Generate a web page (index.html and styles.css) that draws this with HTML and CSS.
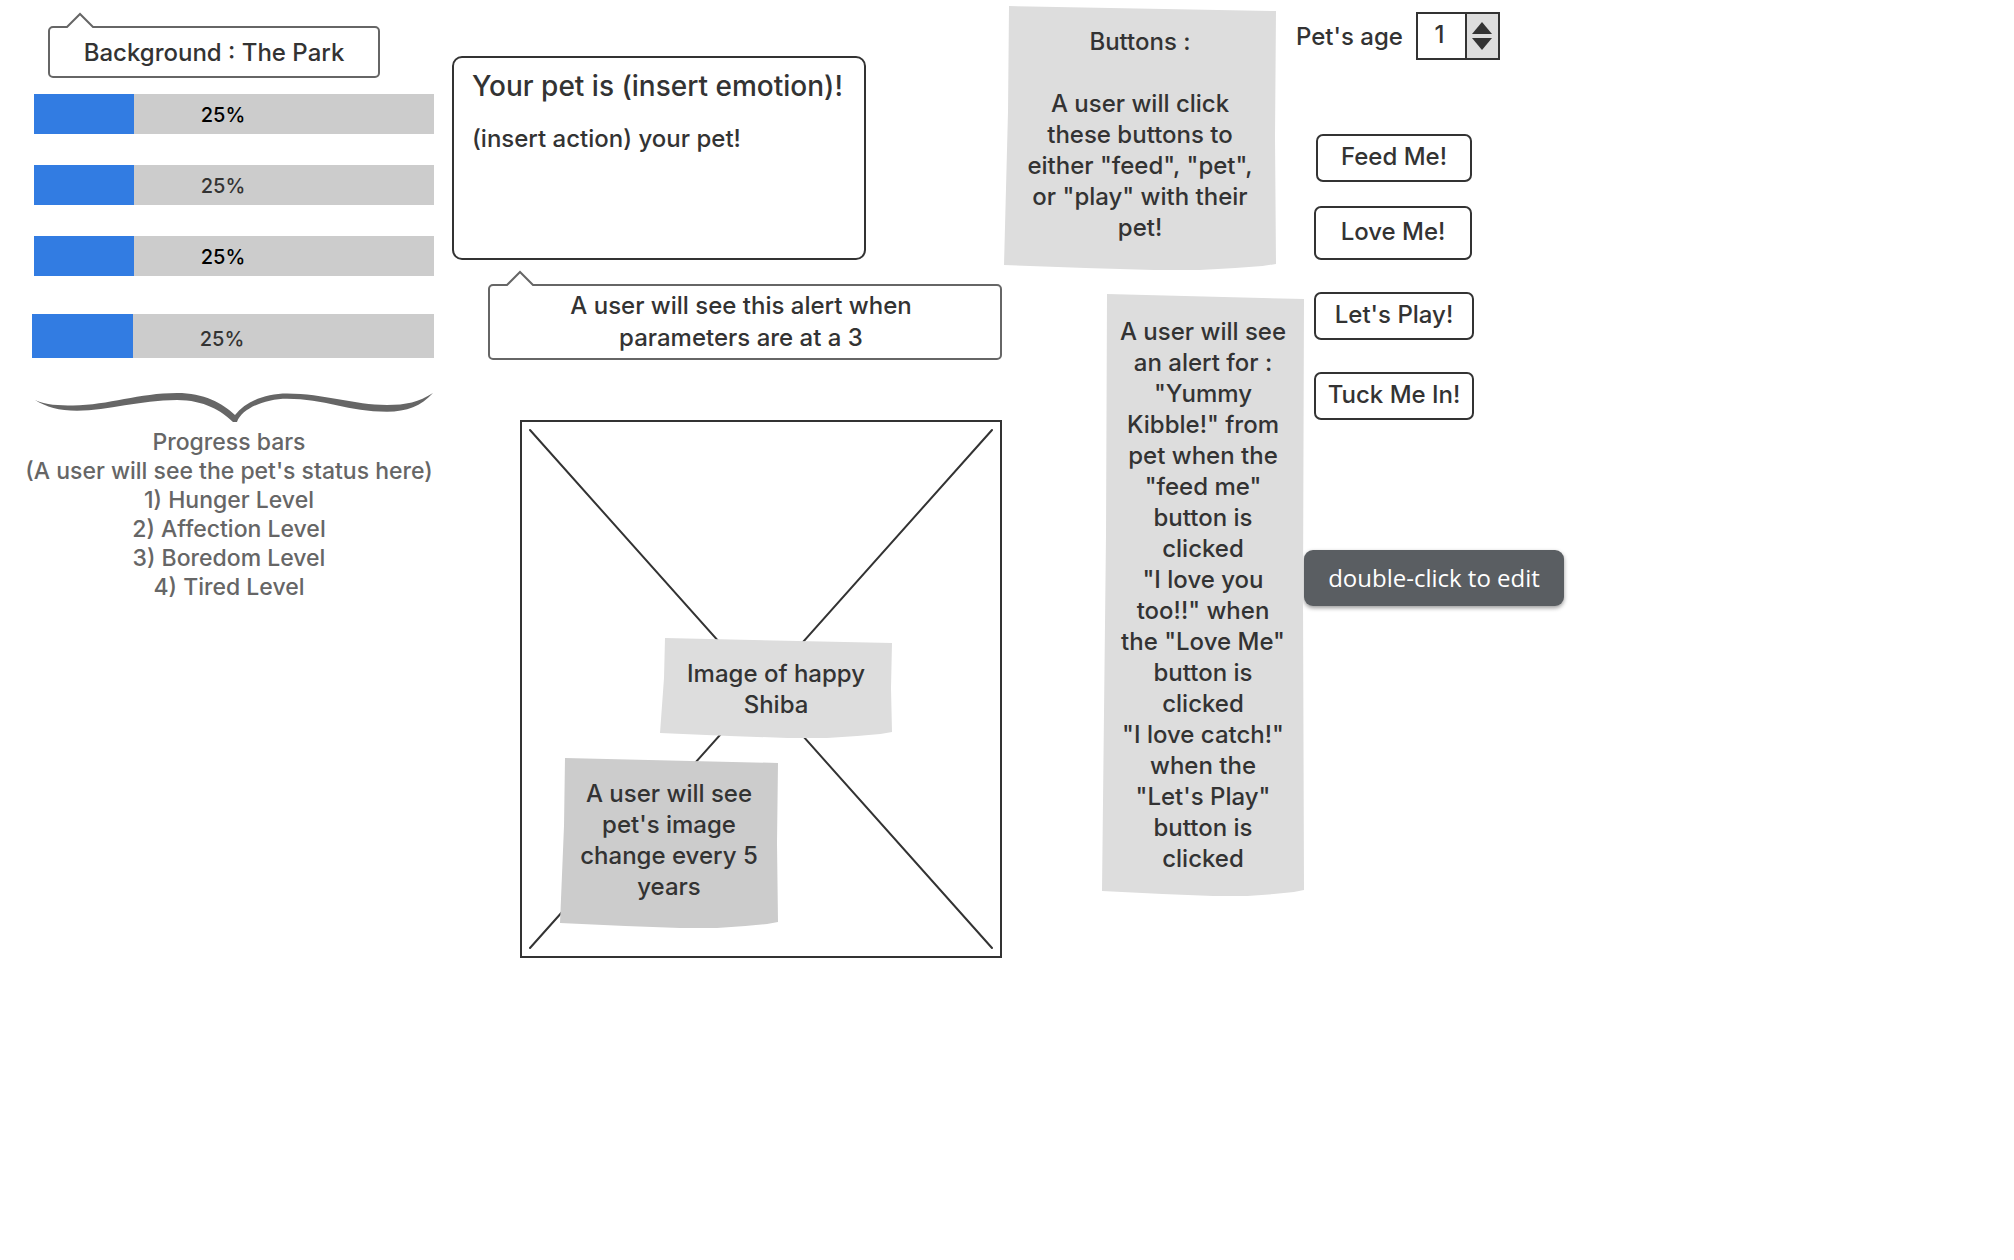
FILE: index.html
```html
<!DOCTYPE html>
<html lang="en">
<head>
<meta charset="utf-8">
<meta name="viewport" content="width=device-width, initial-scale=1">
<title>Virtual Pet Wireframe</title>
<link rel="stylesheet" href="styles.css">
</head>
<body>
<main class="board">
  <section class="status">
    <div class="callout callout-scene">
      <svg class="callout-tip" viewBox="0 0 32 16" aria-hidden="true"><path d="M2 16 16 2 30 16"/></svg>
      Background : The Park
    </div>
    <div class="bar bar-strong" role="progressbar" aria-label="Hunger" aria-valuenow="25"><div class="bar-fill" style="width:25%"></div><span class="bar-value">25%</span></div>
    <div class="bar" role="progressbar" aria-label="Affection" aria-valuenow="25"><div class="bar-fill" style="width:25%"></div><span class="bar-value">25%</span></div>
    <div class="bar bar-strong" role="progressbar" aria-label="Boredom" aria-valuenow="25"><div class="bar-fill" style="width:25%"></div><span class="bar-value">25%</span></div>
    <div class="bar bar-tall" role="progressbar" aria-label="Tiredness" aria-valuenow="25"><div class="bar-fill" style="width:25%"></div><span class="bar-value">25%</span></div>
    <svg class="brace" viewBox="0 0 400 30" preserveAspectRatio="none" aria-hidden="true"><path d="M1 8C12 13 25 13.500 39 13.500C75 13 105 1 143 1C170 1 188 11 201 23C212 9 232 1.500 253 1.500C290 1.500 320 13 353 13C372 13 385 10 399 1C387 14 373 19.700 353 19.700C315 19.700 290 6.700 253 6.700C232 6.700 208 16 203 30L199 30C188 19 170 8 143 8C105 8 75 18.700 43 18.700C25 18.700 12 15 1 8Z"/></svg>
    <p class="legend">Progress bars<br>(A user will see the pet's status here)<br>1) Hunger Level<br>2) Affection Level<br>3) Boredom Level<br>4) Tired Level</p>
  </section>

  <section class="stage">
    <div class="alert">
      <h1 class="alert-title">Your pet is (insert emotion)!</h1>
      <p class="alert-text">(insert action) your pet!</p>
    </div>
    <div class="callout callout-alert">
      <svg class="callout-tip" viewBox="0 0 32 16" aria-hidden="true"><path d="M2 16 16 2 30 16"/></svg>
      A user will see this alert when<br>parameters are at a 3
    </div>
    <div class="picture">
      <svg class="picture-cross" viewBox="0 0 478 534" preserveAspectRatio="none" aria-hidden="true"><path d="M8 8 470 526M470 8 8 526"/></svg>
      <p class="note note-image">Image of happy<br>Shiba</p>
      <p class="note note-years">A user will see<br>pet's image<br>change every 5<br>years</p>
    </div>
  </section>

  <section class="side">
    <div class="notes">
      <p class="note note-buttons">Buttons :<br><br>A user will click<br>these buttons to<br>either "feed", "pet",<br>or "play" with their<br>pet!</p>
      <p class="note note-alerts">A user will see<br>an alert for :<br>"Yummy<br>Kibble!" from<br>pet when the<br>"feed me"<br>button is<br>clicked<br>"I love you<br>too!!" when<br>the "Love Me"<br>button is<br>clicked<br>"I love catch!"<br>when the<br>"Let's Play"<br>button is<br>clicked</p>
    </div>
    <div class="controls">
      <div class="age">
        <label for="age">Pet's age</label>
        <div class="stepper">
          <input class="stepper-value" id="age" type="number" value="1">
          <div class="stepper-buttons">
            <button class="stepper-button" type="button" aria-label="Increase age"><svg viewBox="0 0 20 12" aria-hidden="true"><path d="M10 0 20 12H0Z"/></svg></button>
            <button class="stepper-button" type="button" aria-label="Decrease age"><svg viewBox="0 0 20 12" aria-hidden="true"><path d="M0 0H20L10 12Z"/></svg></button>
          </div>
        </div>
      </div>
      <div class="actions">
        <button class="action action-feed" type="button">Feed Me!</button>
        <button class="action action-love" type="button">Love Me!</button>
        <button class="action" type="button">Let's Play!</button>
        <button class="action" type="button">Tuck Me In!</button>
      </div>
      <div class="hint" role="tooltip">double-click to edit</div>
    </div>
  </section>
</main>
</body>
</html>
```
FILE: styles.css
```css
* { box-sizing: border-box; }

body {
  margin: 0;
  background: #fff;
  color: #333;
  font: 500 24px/31px Inter, "Noto Sans", sans-serif;
}

h1, p { margin: 0; }

button, input {
  font: inherit;
  color: inherit;
}

.board {
  display: grid;
  grid-template-columns: minmax(0, 452fr) minmax(0, 552fr) minmax(0, 1010fr);
  align-items: start;
}

/* Status column */
.status { padding: 26px 18px 0 34px; }

.callout {
  position: relative;
  border: 2px solid #666;
  border-radius: 5px;
  text-align: center;
}

.callout-tip {
  position: absolute;
  top: -16px;
  left: 14px;
  width: 32px;
  height: 16px;
  fill: #fff;
  stroke: #666;
  stroke-width: 2;
}

.callout-scene {
  margin: 0 54px 16px 14px;
  padding: 9px 0 8px;
}

.bar {
  position: relative;
  display: flex;
  align-items: center;
  justify-content: center;
  height: 40px;
  margin-bottom: 31px;
  padding: 2px 22px 0 0;
  background: #ccc;
  font-size: 20px;
}

.bar-strong { color: #000; }

.bar-tall {
  height: 44px;
  margin: 38px 0 34px -2px;
  padding-top: 6px;
}

.bar-fill {
  position: absolute;
  inset: 0 auto 0 0;
  background: #327ce2;
}

.bar-value { position: relative; }

.brace {
  display: block;
  width: 100%;
  height: 30px;
  fill: #666;
}

.legend {
  margin: 6px 0 0 -10px;
  color: #666;
  font-size: 23px;
  line-height: 29px;
  text-align: center;
  white-space: nowrap;
}

/* Stage column */
.stage { padding: 56px 2px 0 0; }

.alert {
  min-height: 204px;
  margin-right: 136px;
  padding: 11px 18px;
  border: 2px solid #333;
  border-radius: 10px;
}

.alert-title {
  font-size: 28px;
  font-weight: 500;
  line-height: 34px;
  white-space: nowrap;
}

.alert-text { margin-top: 20px; }

.callout-alert {
  margin: 24px 0 60px 36px;
  padding: 4px 8px 4px 0;
  line-height: 32px;
}

.picture {
  position: relative;
  height: 538px;
  margin-left: 68px;
  border: 2px solid #333;
}

.picture-cross {
  display: block;
  width: 100%;
  height: 100%;
  fill: none;
  stroke: #333;
  stroke-width: 2;
  stroke-linecap: round;
}

/* Sticky notes */
.note {
  padding: 20px 0 24px;
  background: #ddd;
  clip-path: polygon(5px 0, 100% 5px, calc(100% - 1px) 50%, 100% calc(100% - 6px), 95% calc(100% - 4px), 85% calc(100% - 2px), 72% 100%, 55% 100%, 30% calc(100% - 2px), 0 calc(100% - 5px), 4px 40%);
  text-align: center;
  white-space: nowrap;
}

.note-image {
  position: absolute;
  top: 216px;
  left: 138px;
  width: 232px;
  height: 100px;
}

.note-years {
  position: absolute;
  top: 336px;
  left: 38px;
  width: 218px;
  height: 170px;
  background: #ccc;
}

/* Side column */
.side {
  display: flex;
  align-items: flex-start;
}

.notes {
  width: 292px;
  padding-top: 6px;
}

.note-buttons {
  height: 264px;
  margin: 0 20px 24px 0;
}

.note-alerts {
  height: 602px;
  margin: 0 -8px 0 98px;
  padding-top: 22px;
}

.controls { padding-top: 12px; }

.age {
  display: flex;
  align-items: center;
  gap: 13px;
}

.stepper {
  display: flex;
  height: 48px;
  border: 2px solid #333;
}

.stepper-value {
  width: 47px;
  padding: 0 4px 4px 0;
  border: 0;
  background: #fff;
  text-align: center;
  appearance: textfield;
}

.stepper-value::-webkit-inner-spin-button { appearance: none; margin: 0; }

.stepper-buttons {
  display: flex;
  flex-direction: column;
  justify-content: center;
  gap: 4px;
  width: 33px;
  border-left: 2px solid #333;
  background: #ddd;
}

.stepper-button {
  display: flex;
  justify-content: center;
  padding: 0;
  border: 0;
  background: none;
}

.stepper-button svg {
  width: 20px;
  height: 12px;
  fill: #333;
}

.actions {
  display: flex;
  flex-direction: column;
  gap: 32px;
  width: 160px;
  margin: 74px 0 0 18px;
}

.action {
  height: 48px;
  padding: 0 0 4px;
  border: 2px solid #333;
  border-radius: 7px;
  background: #fff;
  white-space: nowrap;
}

.action-feed {
  margin: 0 2px -8px;
}

.action-love {
  height: 54px;
  margin-right: 2px;
}

.hint {
  width: 260px;
  margin: 130px 0 0 8px;
  padding: 14px 0;
  border-radius: 9px;
  background: #5a5e62;
  box-shadow: 0 2px 4px rgba(0, 0, 0, 0.4);
  color: #fff;
  font: 400 24px/28px "Open Sans", sans-serif;
  text-align: center;
}
```
